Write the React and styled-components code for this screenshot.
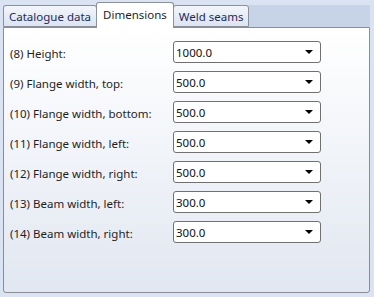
import React from "react";
import styled, { createGlobalStyle } from "styled-components";

const GlobalStyle = createGlobalStyle`
  html, body {
    margin: 0;
    padding: 0;
    background: #d9e3f1;
  }
  body {
    font-family: "Noto Sans", "Open Sans", sans-serif;
    font-size: 11.5px;
    color: #1e1e1e;
  }
`;

const rows = [
  ["(8) Height:", "1000.0"],
  ["(9) Flange width, top:", "500.0"],
  ["(10) Flange width, bottom:", "500.0"],
  ["(11) Flange width, left:", "500.0"],
  ["(12) Flange width, right:", "500.0"],
  ["(13) Beam width, left:", "300.0"],
  ["(14) Beam width, right:", "300.0"],
];

function App() {
  return (
    <Wrap>
      <GlobalStyle />
      <TabBar>
        <Tab>Catalogue data</Tab>
        <Tab active>Dimensions</Tab>
        <Tab>Weld seams</Tab>
      </TabBar>
      <Panel>
        <Form>
          {rows.map(([label, value]) => (
            <React.Fragment key={label}>
              <Label>{label}</Label>
              <Combo>
                <ComboText>{value}</ComboText>
                <Arrow />
              </Combo>
            </React.Fragment>
          ))}
        </Form>
      </Panel>
    </Wrap>
  );
}

const Wrap = styled.div`
  width: 374px;
  height: 297px;
  padding: 2px 4px 0 3px;
  box-sizing: border-box;
  display: flex;
  flex-direction: column;
`;

const TabBar = styled.div`
  display: flex;
  align-items: flex-end;
  height: 25px;
  background: linear-gradient(to bottom, transparent 3px, #c7d4e8 3px);
  border-top-right-radius: 4px;
  position: relative;
  z-index: 1;
`;

const Tab = styled.div`
  box-sizing: border-box;
  height: ${(p) => (p.active ? "26px" : "22px")};
  margin-bottom: ${(p) => (p.active ? "-1px" : "0")};
  padding: ${(p) => (p.active ? "4px 6px 0 6px" : "3px 5px 0 5px")};
  margin-left: ${(p) => (p.active ? "-1px" : "0")};
  margin-right: ${(p) => (p.active ? "-1px" : "0")};
  border: 1px solid #8b919b;
  border-bottom: ${(p) => (p.active ? "none" : "1px solid #8b919b")};
  border-radius: 3px 3px 0 0;
  background: ${(p) =>
    p.active ? "#ffffff" : "linear-gradient(to bottom, #f3f6fb, #dbe4f1)"};
  color: ${(p) => (p.active ? "#1e1e1e" : "#1e2a5a")};
  font-size: 11.5px;
  line-height: 16px;
  white-space: nowrap;
  position: relative;
  z-index: ${(p) => (p.active ? 2 : 1)};
`;

const Panel = styled.div`
  height: 266px;
  box-sizing: border-box;
  border: 1px solid #8a8d94;
  border-radius: 0 0 3px 3px;
  background: linear-gradient(to bottom, #ffffff, #e1e7f1);
  padding: 13px 6px 0 6px;
`;

const Form = styled.div`
  display: grid;
  grid-template-columns: 163px 148px;
  grid-auto-rows: 22px;
  row-gap: 8px;
  align-items: center;
`;

const Label = styled.div`
  white-space: nowrap;
  padding-top: 2px;
`;

const Combo = styled.div`
  box-sizing: border-box;
  height: 22px;
  border: 1px solid #707070;
  border-radius: 3px;
  background: #ffffff;
  display: flex;
  align-items: center;
  padding: 0 7px 0 2px;
`;

const ComboText = styled.span`
  flex: 1;
  font-size: 11.5px;
  color: #111;
`;

const Arrow = styled.span`
  width: 0;
  height: 0;
  border-left: 4px solid transparent;
  border-right: 4px solid transparent;
  border-top: 4px solid #000;
`;

export default App;
